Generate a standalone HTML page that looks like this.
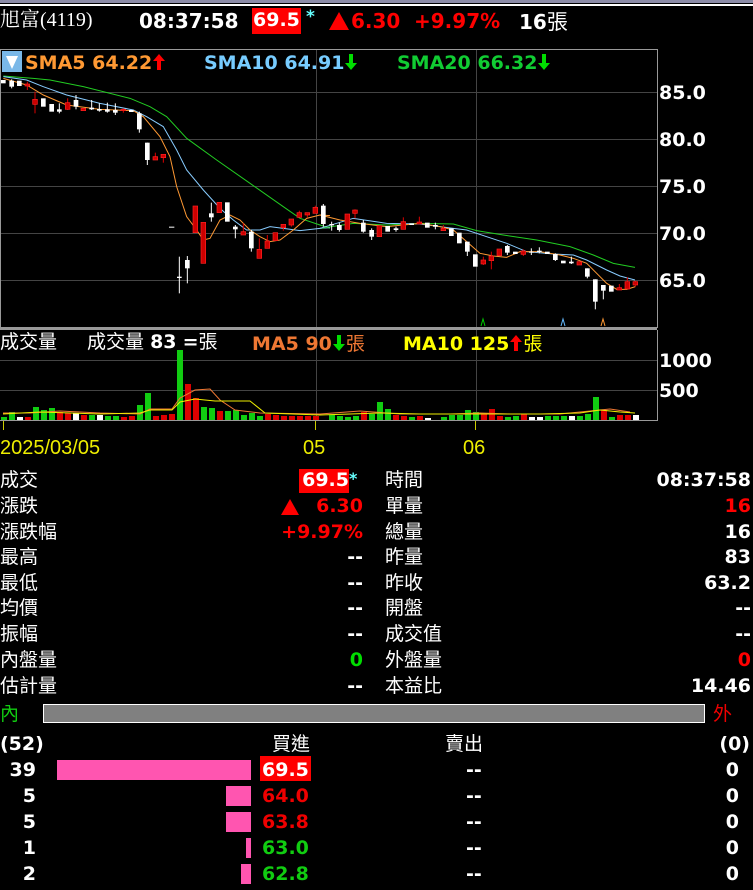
<!DOCTYPE html>
<html><head><meta charset="utf-8">
<style>
*{margin:0;padding:0;box-sizing:border-box}
body{width:753px;height:890px;background:#000;overflow:hidden;position:relative;font-family:"DejaVu Sans","Noto Sans CJK TC",sans-serif;color:#fff}
.t{position:absolute;white-space:nowrap;line-height:1}
.b{font-weight:bold}
.cj{font-family:"Noto Sans CJK TC","WenQuanYi Zen Hei",sans-serif;font-weight:normal}
.row{position:absolute;left:0;width:753px;height:25px;font-size:19px}
.row span{position:absolute;top:3px;line-height:1;white-space:nowrap}
.row .cj{top:1px}
.ar{display:inline-block;vertical-align:-2px}
</style></head><body>
<div style="position:absolute;left:0;top:0;width:753px;height:3px;background:#8c8ca8"></div>
<div style="position:absolute;left:0;top:4px;width:753px;height:2px;background:#fff"></div>

<div class="t" style="left:0;top:10px;font-size:20px;font-family:'Liberation Serif','Noto Serif CJK SC',serif">旭富(4119)</div>
<div class="t b" style="left:139px;top:11px;font-size:20px">08:37:58</div>
<div style="position:absolute;left:252px;top:8px;width:49px;height:26px;background:#f00"></div>
<div class="t b" style="left:253px;top:11px;font-size:19px">69.5</div>
<div class="t b" style="left:306px;top:9px;font-size:17px;color:#6ff">*</div>
<svg style="position:absolute;left:328px;top:11px" width="22" height="20"><path d="M11 1 L21 19 L1 19 Z" fill="#f00"/></svg>
<div class="t b" style="left:351px;top:11px;font-size:20px;color:#f00">6.30</div>
<div class="t b" style="left:414px;top:11px;font-size:20px;color:#f00">+9.97%</div>
<div class="t b" style="left:519px;top:11px;font-size:20px">16<span class="cj" style="font-size:21px">張</span></div>

<svg width="753" height="460" style="position:absolute;left:0;top:0">
<g stroke="#444" stroke-width="1">
<line x1="0" y1="92.5" x2="657" y2="92.5"/><line x1="0" y1="139.5" x2="657" y2="139.5"/><line x1="0" y1="186.5" x2="657" y2="186.5"/><line x1="0" y1="233.5" x2="657" y2="233.5"/><line x1="0" y1="280.5" x2="657" y2="280.5"/>
<line x1="316.5" y1="50" x2="316.5" y2="420"/><line x1="476.5" y1="50" x2="476.5" y2="420"/>
<line x1="0" y1="360.5" x2="657" y2="360.5"/><line x1="0" y1="390.5" x2="657" y2="390.5"/>
</g>
<rect x="0.5" y="49.5" width="657" height="278" fill="none" stroke="#999"/>
<rect x="0" y="327" width="657" height="3" fill="#999"/>
<line x1="657.5" y1="330" x2="657.5" y2="421" stroke="#999"/>
<line x1="0" y1="420.5" x2="657" y2="420.5" stroke="#999"/>
<g stroke="#cc0" stroke-width="1"><line x1="3.5" y1="421" x2="3.5" y2="430"/><line x1="315.5" y1="421" x2="315.5" y2="430"/><line x1="475.5" y1="421" x2="475.5" y2="430"/></g>
<g stroke-width="1" fill="none"><path d="M481 326 L483 319 L485 326" stroke="#0c0"/><path d="M561 326 L563 319 L565 326" stroke="#6bf"/><path d="M601 326 L603 319 L605 326" stroke="#f93"/></g>

<g transform="translate(0,60) scale(0.33333)">
<polyline fill="none" stroke="#2c2" stroke-width="3" points="10,48 100,55 150,60 250,80 390,115 450,140 500,170 560,235 650,300 750,370 850,440 900,475 960,495 990,505"/>
<polyline fill="none" stroke="#8cf" stroke-width="3" points="10,50 80,60 130,80 200,105 300,130 400,150 440,170 490,200 530,270 560,330 610,390 660,445 700,480 740,510 780,510 810,500 850,505 900,512 960,505 990,503"/>
<polyline fill="none" stroke="#f93" stroke-width="3" points="10,55 80,75 130,105 200,135 300,148 400,152 430,170 480,230 510,290 530,380 560,470 590,510 610,540 630,535 660,480 690,465 720,480 750,510 780,530 810,545 840,540 880,510 920,475 960,465 990,467"/>
<g stroke="#fff" stroke-width="3">
<line x1="35" y1="58" x2="35" y2="85"/><line x1="178" y1="130" x2="178" y2="160"/><line x1="228" y1="105" x2="228" y2="148"/><line x1="275" y1="120" x2="275" y2="150"/><line x1="298" y1="130" x2="298" y2="155"/><line x1="322" y1="128" x2="322" y2="158"/><line x1="346" y1="130" x2="346" y2="165"/><line x1="418" y1="155" x2="418" y2="218"/><line x1="442" y1="248" x2="442" y2="315"/><line x1="538" y1="590" x2="538" y2="700"/><line x1="562" y1="588" x2="562" y2="670"/><line x1="634" y1="428" x2="634" y2="485"/><line x1="706" y1="495" x2="706" y2="535"/><line x1="754" y1="510" x2="754" y2="575"/>
</g>
<g stroke="#d00" stroke-width="3">
<line x1="82" y1="65" x2="82" y2="90"/><line x1="105" y1="95" x2="105" y2="160"/><line x1="203" y1="115" x2="203" y2="150"/><line x1="370" y1="145" x2="370" y2="158"/><line x1="466" y1="278" x2="466" y2="300"/><line x1="490" y1="283" x2="490" y2="308"/><line x1="730" y1="490" x2="730" y2="525"/><line x1="778" y1="535" x2="778" y2="595"/><line x1="802" y1="525" x2="802" y2="565"/><line x1="850" y1="493" x2="850" y2="512"/><line x1="874" y1="477" x2="874" y2="500"/><line x1="898" y1="452" x2="898" y2="472"/><line x1="922" y1="458" x2="922" y2="472"/><line x1="946" y1="437" x2="946" y2="460"/>
</g>
<g fill="#fff">
<rect x="3" y="60" width="14" height="10"/><rect x="28" y="62" width="14" height="18"/><rect x="51" y="62" width="14" height="16"/><rect x="123" y="115" width="14" height="25"/><rect x="148" y="132" width="14" height="23"/><rect x="171" y="148" width="14" height="7"/><rect x="221" y="120" width="14" height="20"/><rect x="268" y="143" width="14" height="5"/><rect x="291" y="147" width="14" height="5"/><rect x="315" y="148" width="14" height="7"/><rect x="339" y="150" width="14" height="8"/><rect x="387" y="150" width="14" height="6"/><rect x="411" y="160" width="14" height="48"/><rect x="435" y="248" width="14" height="52"/><rect x="507" y="500" width="16" height="3"/><rect x="531" y="650" width="14" height="4"/><rect x="555" y="600" width="14" height="25"/><rect x="627" y="460" width="14" height="12"/><rect x="675" y="427" width="14" height="58"/><rect x="699" y="500" width="14" height="8"/><rect x="747" y="515" width="14" height="50"/>
</g>
<g fill="#c00" stroke="#f22" stroke-width="2">
<rect x="75" y="72" width="14" height="6"/><rect x="98" y="118" width="14" height="15"/><rect x="196" y="128" width="14" height="20"/><rect x="243" y="145" width="14" height="7"/><rect x="363" y="148" width="14" height="4"/><rect x="459" y="290" width="14" height="10"/><rect x="483" y="283" width="14" height="10"/><rect x="579" y="438" width="14" height="80"/><rect x="603" y="487" width="14" height="123"/><rect x="651" y="427" width="14" height="31"/><rect x="723" y="515" width="14" height="10"/><rect x="771" y="568" width="14" height="27"/><rect x="795" y="543" width="14" height="22"/><rect x="819" y="518" width="14" height="24"/><rect x="843" y="493" width="14" height="10"/><rect x="867" y="477" width="14" height="18"/><rect x="891" y="458" width="14" height="14"/><rect x="915" y="458" width="14" height="7"/><rect x="939" y="442" width="14" height="18"/>
</g>
</g>

<g transform="translate(320,60) scale(0.33333)">
<polyline fill="none" stroke="#2c2" stroke-width="3" points="0,505 100,490 200,495 300,490 400,492 470,512 550,525 650,540 750,560 820,585 880,610 945,622"/>
<polyline fill="none" stroke="#8cf" stroke-width="3" points="0,505 100,475 200,490 300,492 400,505 440,510 500,530 560,550 620,575 700,582 760,585 800,600 860,630 900,648 945,660"/>
<polyline fill="none" stroke="#f93" stroke-width="3" points="0,465 60,480 120,490 200,500 300,490 360,500 400,510 440,545 480,580 520,588 560,592 600,575 660,575 720,585 760,595 800,610 830,640 860,670 890,688 920,688 946,680"/>
<g stroke="#fff" stroke-width="3">
<line x1="10" y1="432" x2="10" y2="500"/><line x1="35" y1="485" x2="35" y2="512"/><line x1="58" y1="488" x2="58" y2="515"/><line x1="130" y1="480" x2="130" y2="518"/><line x1="155" y1="505" x2="155" y2="540"/><line x1="228" y1="500" x2="228" y2="515"/><line x1="346" y1="488" x2="346" y2="508"/><line x1="442" y1="545" x2="442" y2="588"/><line x1="562" y1="555" x2="562" y2="585"/><line x1="634" y1="565" x2="634" y2="585"/><line x1="658" y1="562" x2="658" y2="580"/><line x1="706" y1="580" x2="706" y2="603"/><line x1="754" y1="590" x2="754" y2="612"/><line x1="802" y1="625" x2="802" y2="655"/><line x1="826" y1="658" x2="826" y2="748"/><line x1="850" y1="675" x2="850" y2="718"/>
</g>
<g stroke="#d00" stroke-width="3">
<line x1="105" y1="448" x2="105" y2="475"/><line x1="250" y1="472" x2="250" y2="508"/><line x1="298" y1="470" x2="298" y2="492"/><line x1="370" y1="495" x2="370" y2="512"/><line x1="490" y1="590" x2="490" y2="615"/><line x1="514" y1="575" x2="514" y2="628"/><line x1="610" y1="568" x2="610" y2="588"/><line x1="898" y1="672" x2="898" y2="690"/><line x1="922" y1="652" x2="922" y2="687"/><line x1="946" y1="662" x2="946" y2="680"/>
</g>
<g fill="#fff">
<rect x="3" y="437" width="14" height="55"/><rect x="28" y="492" width="14" height="4"/><rect x="51" y="495" width="14" height="15"/><rect x="123" y="488" width="14" height="27"/><rect x="148" y="510" width="14" height="20"/><rect x="196" y="498" width="14" height="17"/><rect x="221" y="505" width="14" height="5"/><rect x="268" y="490" width="14" height="5"/><rect x="315" y="488" width="14" height="15"/><rect x="339" y="495" width="14" height="5"/><rect x="387" y="505" width="14" height="23"/><rect x="411" y="518" width="14" height="32"/><rect x="435" y="545" width="14" height="30"/><rect x="459" y="583" width="14" height="37"/><rect x="555" y="558" width="14" height="20"/><rect x="579" y="575" width="14" height="7"/><rect x="627" y="575" width="14" height="3"/><rect x="651" y="572" width="14" height="4"/><rect x="675" y="575" width="14" height="7"/><rect x="699" y="582" width="14" height="18"/><rect x="723" y="602" width="14" height="8"/><rect x="747" y="605" width="14" height="5"/><rect x="795" y="625" width="14" height="25"/><rect x="819" y="658" width="14" height="67"/><rect x="843" y="675" width="14" height="17"/><rect x="867" y="677" width="14" height="18"/>
</g>
<g fill="#c00" stroke="#f22" stroke-width="2">
<rect x="75" y="462" width="14" height="46"/><rect x="98" y="450" width="14" height="10"/><rect x="171" y="497" width="14" height="33"/><rect x="243" y="485" width="14" height="23"/><rect x="291" y="486" width="14" height="6"/><rect x="363" y="505" width="14" height="7"/><rect x="483" y="600" width="14" height="12"/><rect x="507" y="588" width="14" height="14"/><rect x="531" y="567" width="14" height="20"/><rect x="603" y="573" width="14" height="10"/><rect x="771" y="605" width="14" height="10"/><rect x="891" y="683" width="14" height="7"/><rect x="915" y="665" width="14" height="22"/><rect x="939" y="665" width="14" height="10"/>
</g>
</g>

<g>
<g fill="#1c1">
<rect x="1" y="417" width="6" height="3"/><rect x="9" y="412" width="6" height="8"/><rect x="33" y="407" width="6" height="13"/><rect x="41" y="410" width="6" height="10"/><rect x="49" y="408" width="6" height="12"/><rect x="89" y="415" width="6" height="5"/><rect x="105" y="416" width="6" height="4"/><rect x="113" y="416" width="6" height="4"/><rect x="137" y="405" width="6" height="15"/><rect x="145" y="393" width="6" height="27"/><rect x="177" y="350" width="6" height="70"/><rect x="201" y="407" width="6" height="13"/><rect x="209" y="408" width="6" height="12"/><rect x="225" y="411" width="6" height="9"/><rect x="233" y="410" width="6" height="10"/><rect x="241" y="415" width="6" height="5"/><rect x="249" y="413" width="6" height="7"/><rect x="257" y="416" width="6" height="4"/><rect x="329" y="415" width="6" height="5"/><rect x="337" y="416" width="6" height="4"/><rect x="345" y="417" width="6" height="3"/><rect x="353" y="416" width="6" height="4"/><rect x="369" y="414" width="6" height="6"/><rect x="377" y="402" width="6" height="18"/><rect x="385" y="409" width="6" height="11"/><rect x="409" y="417" width="6" height="3"/><rect x="441" y="417" width="6" height="3"/><rect x="449" y="415" width="6" height="5"/><rect x="457" y="415" width="6" height="5"/><rect x="465" y="410" width="6" height="10"/><rect x="473" y="412" width="6" height="8"/><rect x="505" y="417" width="6" height="3"/><rect x="513" y="416" width="6" height="4"/><rect x="545" y="416" width="6" height="4"/><rect x="553" y="416" width="6" height="4"/><rect x="561" y="416" width="6" height="4"/><rect x="577" y="416" width="6" height="4"/><rect x="585" y="414" width="6" height="6"/><rect x="593" y="397" width="6" height="23"/><rect x="609" y="417" width="6" height="3"/>
</g>
<g fill="#d00">
<rect x="25" y="417" width="6" height="3"/><rect x="57" y="412" width="6" height="8"/><rect x="65" y="413" width="6" height="7"/><rect x="81" y="415" width="6" height="5"/><rect x="121" y="417" width="6" height="3"/><rect x="129" y="416" width="6" height="4"/><rect x="153" y="416" width="6" height="4"/><rect x="161" y="415" width="6" height="5"/><rect x="169" y="414" width="6" height="6"/><rect x="185" y="384" width="6" height="36"/><rect x="193" y="398" width="6" height="22"/><rect x="217" y="411" width="6" height="9"/><rect x="265" y="414" width="6" height="6"/><rect x="273" y="415" width="6" height="5"/><rect x="281" y="416" width="6" height="4"/><rect x="289" y="416" width="6" height="4"/><rect x="297" y="416" width="6" height="4"/><rect x="305" y="416" width="6" height="4"/><rect x="313" y="416" width="6" height="4"/><rect x="361" y="412" width="6" height="8"/><rect x="393" y="415" width="6" height="5"/><rect x="401" y="416" width="6" height="4"/><rect x="417" y="416" width="6" height="4"/><rect x="481" y="414" width="6" height="6"/><rect x="489" y="409" width="6" height="11"/><rect x="497" y="416" width="6" height="4"/><rect x="521" y="414" width="6" height="6"/><rect x="601" y="410" width="6" height="10"/><rect x="617" y="415" width="6" height="5"/><rect x="625" y="415" width="6" height="5"/>
</g>
<g fill="#fff">
<rect x="17" y="417" width="6" height="3"/><rect x="73" y="413" width="6" height="7"/><rect x="97" y="415" width="6" height="5"/><rect x="425" y="418" width="6" height="2"/><rect x="529" y="417" width="6" height="3"/><rect x="537" y="417" width="6" height="3"/><rect x="569" y="416" width="6" height="4"/><rect x="633" y="415" width="6" height="5"/>
</g>
<polyline fill="none" stroke="#e73" stroke-width="1" points="3,413 30,413 60,411 100,413 140,414 150,409 172,409 180,398 195,390 210,389 220,400 235,410 260,413 320,414 360,411 400,414 450,414 480,413 510,414 560,414 590,411 610,409 630,412"/>
<polyline fill="none" stroke="#ee0" stroke-width="1" points="3,414 40,412 100,414 140,413 150,410 172,410 180,402 195,399 215,401 250,401 265,413 320,415 380,413 420,414 480,414 540,414 580,413 600,410 620,412 635,413"/>
</g>

<g font-family="DejaVu Sans,sans-serif" font-weight="bold" font-size="19" fill="#fff">
<text x="659" y="99">85.0</text><text x="659" y="146">80.0</text><text x="659" y="193">75.0</text><text x="659" y="240">70.0</text><text x="659" y="287">65.0</text>
<text x="659" y="367">1000</text><text x="659" y="397">500</text>
</g>
<g font-family="Liberation Sans,sans-serif" font-size="20" fill="#ee0">
<text x="0" y="454">2025/03/05</text><text x="303" y="454">05</text><text x="463" y="454">06</text>
</g>
<rect x="0" y="461" width="753" height="2" fill="#fff"/>
<rect x="0" y="465" width="753" height="1" fill="#fff"/>
<rect x="2" y="51" width="20" height="21" fill="#7ab8e8"/>
<path d="M6 56 L18 56 L12 69 Z" fill="#fff"/>
</svg>

<div class="t b" style="left:25px;top:53px;font-size:19px;color:#f93">SMA5 64.22<svg class="ar" width="14" height="18"><path d="M7 1 L13 8 L9 8 L9 17 L5 17 L5 8 L1 8 Z" fill="#f00"/></svg></div>
<div class="t b" style="left:204px;top:53px;font-size:19px;color:#7cf">SMA10 64.91<svg class="ar" width="14" height="18"><path d="M7 17 L13 10 L9 10 L9 1 L5 1 L5 10 L1 10 Z" fill="#0d0"/></svg></div>
<div class="t b" style="left:397px;top:53px;font-size:19px;color:#1c3">SMA20 66.32<svg class="ar" width="14" height="18"><path d="M7 17 L13 10 L9 10 L9 1 L5 1 L5 10 L1 10 Z" fill="#0d0"/></svg></div>

<div class="t cj" style="left:0;top:331px;font-size:19px">成交量</div>
<div class="t" style="left:87px;top:331px;font-size:19px"><span class="cj">成交量</span> <b>83</b> <b>=</b><span class="cj">張</span></div>
<div class="t b" style="left:252px;top:333px;font-size:19px;color:#e73">MA5 90<svg class="ar" width="14" height="18"><path d="M7 17 L13 10 L9 10 L9 1 L5 1 L5 10 L1 10 Z" fill="#0d0"/></svg><span class="cj">張</span></div>
<div class="t b" style="left:403px;top:333px;font-size:19px;color:#ff0">MA10 125<svg class="ar" width="14" height="18"><path d="M7 1 L13 8 L9 8 L9 17 L5 17 L5 8 L1 8 Z" fill="#f00"/></svg><span class="cj">張</span></div>

<div style="position:absolute;left:299px;top:469px;width:50px;height:24px;background:#f00"></div>
<div class="row" style="top:468px"><span class="cj" style="left:0">成交</span><span class="b" style="right:404px">69.5</span><span class="b" style="left:349px;color:#6ff;font-size:16px">*</span><span class="cj" style="left:385px">時間</span><span class="b" style="right:2px">08:37:58</span></div>
<div class="row" style="top:494px"><span class="cj" style="left:0">漲跌</span><svg style="position:absolute;left:280px;top:4px" width="20" height="18"><path d="M10 1 L19 17 L1 17 Z" fill="#f00"/></svg><span class="b" style="right:390px;color:#f00">6.30</span><span class="cj" style="left:385px">單量</span><span class="b" style="right:2px;color:#f00">16</span></div>
<div class="row" style="top:520px"><span class="cj" style="left:0">漲跌幅</span><span class="b" style="right:390px;color:#f00">+9.97%</span><span class="cj" style="left:385px">總量</span><span class="b" style="right:2px">16</span></div>
<div class="row" style="top:545px"><span class="cj" style="left:0">最高</span><span class="b" style="right:390px">--</span><span class="cj" style="left:385px">昨量</span><span class="b" style="right:2px">83</span></div>
<div class="row" style="top:571px"><span class="cj" style="left:0">最低</span><span class="b" style="right:390px">--</span><span class="cj" style="left:385px">昨收</span><span class="b" style="right:2px">63.2</span></div>
<div class="row" style="top:596px"><span class="cj" style="left:0">均價</span><span class="b" style="right:390px">--</span><span class="cj" style="left:385px">開盤</span><span class="b" style="right:2px">--</span></div>
<div class="row" style="top:622px"><span class="cj" style="left:0">振幅</span><span class="b" style="right:390px">--</span><span class="cj" style="left:385px">成交值</span><span class="b" style="right:2px">--</span></div>
<div class="row" style="top:648px"><span class="cj" style="left:0">內盤量</span><span class="b" style="right:390px;color:#0d0">0</span><span class="cj" style="left:385px">外盤量</span><span class="b" style="right:2px;color:#f00">0</span></div>
<div class="row" style="top:674px"><span class="cj" style="left:0">估計量</span><span class="b" style="right:390px">--</span><span class="cj" style="left:385px">本益比</span><span class="b" style="right:2px">14.46</span></div>

<div class="t cj" style="left:0;top:703px;font-size:19px;color:#1c1">內</div>
<div style="position:absolute;left:43px;top:704px;width:662px;height:19px;background:#808080;border:1px solid #fff"></div>
<div class="t cj" style="left:713px;top:703px;font-size:19px;color:#e00">外</div>

<div class="row" style="top:732px"><span class="b" style="left:0">(52)</span><span class="cj" style="right:443px">買進</span><span class="cj" style="left:445px">賣出</span><span class="b" style="right:3px">(0)</span></div>
<div style="position:absolute;left:57px;top:760px;width:194px;height:20px;background:#ff55b0"></div>
<div style="position:absolute;left:260px;top:756px;width:51px;height:25px;background:#f00"></div>
<div style="position:absolute;left:226px;top:786px;width:25px;height:20px;background:#ff55b0"></div>
<div style="position:absolute;left:226px;top:812px;width:25px;height:20px;background:#ff55b0"></div>
<div style="position:absolute;left:246px;top:838px;width:5px;height:20px;background:#ff55b0"></div>
<div style="position:absolute;left:241px;top:864px;width:10px;height:20px;background:#ff55b0"></div>
<div class="row" style="top:758px"><span class="b" style="right:717px">39</span><span class="b" style="left:262px">69.5</span><span class="b" style="left:466px">--</span><span class="b" style="right:14px">0</span></div>
<div class="row" style="top:784px"><span class="b" style="right:717px">5</span><span class="b" style="left:262px;color:#e00">64.0</span><span class="b" style="left:466px">--</span><span class="b" style="right:14px">0</span></div>
<div class="row" style="top:810px"><span class="b" style="right:717px">5</span><span class="b" style="left:262px;color:#e00">63.8</span><span class="b" style="left:466px">--</span><span class="b" style="right:14px">0</span></div>
<div class="row" style="top:836px"><span class="b" style="right:717px">1</span><span class="b" style="left:262px;color:#1c1">63.0</span><span class="b" style="left:466px">--</span><span class="b" style="right:14px">0</span></div>
<div class="row" style="top:862px"><span class="b" style="right:717px">2</span><span class="b" style="left:262px;color:#1c1">62.8</span><span class="b" style="left:466px">--</span><span class="b" style="right:14px">0</span></div>
</body></html>
